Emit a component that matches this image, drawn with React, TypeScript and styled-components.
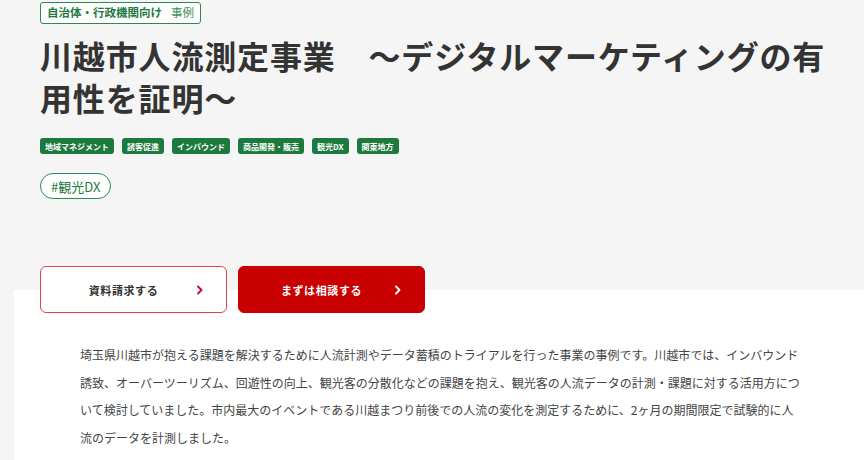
import React from "react";
import styled, { createGlobalStyle } from "styled-components";

const Global = createGlobalStyle`
  html, body { margin: 0; padding: 0; background: #f5f5f5; }
  body { font-family: "Noto Sans CJK JP", "Noto Sans", sans-serif; color: #333; }
  * { box-sizing: border-box; }
`;

const Page = styled.div`
  width: 864px;
  height: 460px;
  overflow: hidden;
  background: #f5f5f5;
`;

const Header = styled.header`
  padding: 2px 0 0 40px;
  display: flex;
  flex-direction: column;
  align-items: flex-start;
`;

const Category = styled.div`
  display: inline-flex;
  align-items: center;
  gap: 9px;
  height: 22px;
  padding: 0 6px;
  border: 1px solid #2b8a4f;
  border-radius: 3px;
  background: #fff;
  font-size: 11.5px;
  line-height: 1;
  color: #1f7a40;
`;

const CatStrong = styled.span`
  font-weight: 700;
`;

const CatLight = styled.span`
  font-weight: 400;
  color: #3f8f5c;
`;

const Title = styled.h1`
  margin: 10px 0 0;
  width: 800px;
  font-size: 32px;
  line-height: 42px;
  font-weight: 700;
  letter-spacing: 0.85px;
  color: #333;
`;

const Tags = styled.ul`
  display: flex;
  gap: 8px;
  margin: 20px 0 0;
  padding: 0;
  list-style: none;
`;

const Tag = styled.li`
  display: flex;
  align-items: center;
  height: 16px;
  padding: 0 5px;
  border-radius: 3px;
  background: #1c7a3e;
  color: #fff;
  font-size: 8px;
  font-weight: 700;
  white-space: nowrap;
`;

const HashTag = styled.div`
  margin-top: 19px;
  display: inline-flex;
  align-items: center;
  height: 26px;
  padding: 0 10px;
  border: 1px solid #2b8a4f;
  border-radius: 13px;
  background: #fff;
  color: #1f7a40;
  font-size: 13px;
`;

const Actions = styled.div`
  position: relative;
  z-index: 1;
  display: flex;
  gap: 11px;
  margin: 67px 0 -23px 40px;
`;

const ActionButton = styled.a<{ $primary?: boolean }>`
  position: relative;
  display: flex;
  align-items: center;
  justify-content: center;
  width: 187px;
  height: 47px;
  padding-right: 20px;
  border-radius: 6px;
  border: 1px solid ${(p) => (p.$primary ? "#c80000" : "#e0454f")};
  background: ${(p) => (p.$primary ? "#c80000" : "#fff")};
  color: ${(p) => (p.$primary ? "#fff" : "#333")};
  font-size: 11px;
  font-weight: 700;
  letter-spacing: 0.6px;
  text-decoration: none;
`;

const Chevron = styled.svg<{ $primary?: boolean }>`
  position: absolute;
  right: 22px;
  top: 50%;
  width: 8px;
  height: 10px;
  margin-top: -5px;
  color: ${(p) => (p.$primary ? "#fff" : "#c4003a")};
`;

const Panel = styled.section`
  margin-left: 14px;
  background: #fff;
  padding: 51px 0 40px 66px;
  min-height: 200px;
`;

const Body = styled.p`
  margin: 0;
  width: 722px;
  font-size: 12px;
  line-height: 27.6px;
  color: #444;
`;

const Arrow = ({ primary }: { primary?: boolean }) => (
  <Chevron $primary={primary} viewBox="0 0 8 10" fill="none">
    <path d="M2 1.5 L5.5 5 L2 8.5" stroke="currentColor" strokeWidth="1.8" strokeLinecap="round" strokeLinejoin="round" />
  </Chevron>
);

const tags = ["地域マネジメント", "誘客促進", "インバウンド", "商品開発・販売", "観光DX", "関東地方"];

export default function App() {
  return (
    <Page>
      <Global />
      <Header>
        <Category>
          <CatStrong>自治体・行政機関向け</CatStrong>
          <CatLight>事例</CatLight>
        </Category>
        <Title>川越市人流測定事業　～デジタルマーケティングの有用性を証明～</Title>
        <Tags>
          {tags.map((t) => (
            <Tag key={t}>{t}</Tag>
          ))}
        </Tags>
        <HashTag>#観光DX</HashTag>
      </Header>
      <Actions>
        <ActionButton href="#">
          資料請求する
          <Arrow />
        </ActionButton>
        <ActionButton href="#" $primary>
          まずは相談する
          <Arrow primary />
        </ActionButton>
      </Actions>
      <Panel>
        <Body>
          埼玉県川越市が抱える課題を解決するために人流計測やデータ蓄積のトライアルを行った事業の事例です。川越市では、インバウンド誘致、オーバーツーリズム、回遊性の向上、観光客の分散化などの課題を抱え、観光客の人流データの計測・課題に対する活用方について検討していました。市内最大のイベントである川越まつり前後での人流の変化を測定するために、2ヶ月の期間限定で試験的に人流のデータを計測しました。
        </Body>
      </Panel>
    </Page>
  );
}
